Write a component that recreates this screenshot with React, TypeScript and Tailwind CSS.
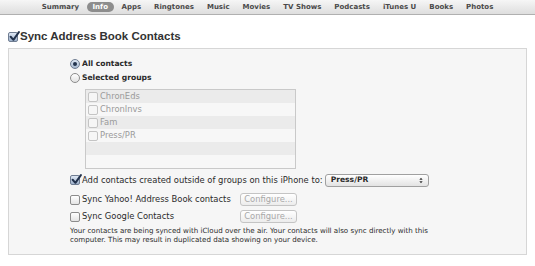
import React from "react";

const Check = ({ checked = false, disabled = false }: { checked?: boolean; disabled?: boolean }) => (
  <span
    className={`relative inline-flex w-[10px] h-[10px] shrink-0 rounded-[2px] border ${
      disabled
        ? "border-[#c4c4c4] bg-[#f6f6f6]"
        : checked
        ? "border-[#6f7d92] bg-gradient-to-b from-[#dfe8f4] to-[#9fb2cc]"
        : "border-[#8c8c8c] bg-gradient-to-b from-white to-[#e4e4e4]"
    }`}
  >
    {checked && (
      <svg viewBox="0 0 10 10" className="absolute left-[0px] top-[-2px] w-[11px] h-[11px]">
        <path d="M1.5 5.2 L4 8 L9 1" fill="none" stroke="#22324c" strokeWidth="1.8" strokeLinecap="round" strokeLinejoin="round" />
      </svg>
    )}
  </span>
);

const Radio = ({ checked = false }: { checked?: boolean }) => (
  <span
    className={`inline-flex w-[10px] h-[10px] shrink-0 rounded-full border items-center justify-center ${
      checked ? "border-[#6f7d92] bg-gradient-to-b from-[#dfe8f4] to-[#a6b8d0]" : "border-[#8c8c8c] bg-gradient-to-b from-white to-[#e2e2e2]"
    }`}
  >
    {checked && <span className="w-[4px] h-[4px] rounded-full bg-[#22324c]" />}
  </span>
);

const tabs = ["Summary", "Info", "Apps", "Ringtones", "Music", "Movies", "TV Shows", "Podcasts", "iTunes U", "Books", "Photos"];

export default function App() {
  const font = { fontFamily: '"DejaVu Sans", "Liberation Sans", sans-serif' };
  return (
    <div className="w-[535px] h-[266px] bg-white overflow-hidden" style={font}>
      <div className="h-[15px] bg-gradient-to-b from-[#f6f6f6] to-[#dedede] border-b border-[#b0b0b0] flex items-center justify-center text-[7px] font-bold text-[#4a4a4a]">
        {tabs.map((t) =>
          t === "Info" ? (
            <span key={t} className="mx-[1px] px-[6px] h-[10px] leading-[10px] rounded-full bg-[#8d8d8d] text-white">
              {t}
            </span>
          ) : (
            <span key={t} className="px-[6.5px]">
              {t}
            </span>
          )
        )}
      </div>

      <div className="flex items-center gap-[2px] ml-[8px] mt-[15px] h-[14px]">
        <Check checked />
        <span className="text-[11.5px] font-bold text-[#333]" style={{ fontFamily: '"Liberation Sans", sans-serif' }}>
          Sync Address Book Contacts
        </span>
      </div>

      <div className="mx-[8px] mt-[4px] h-[207px] border border-[#d6d6d6] bg-[#f6f6f6] pl-[61px] pt-[8px] text-[8.4px] text-[#2a2a2a]">
        <div className="flex items-center gap-[2px] h-[14px] font-bold text-[7.6px]">
          <Radio checked />
          <span>All contacts</span>
        </div>
        <div className="flex items-center gap-[2px] h-[14px] font-bold text-[7.6px]">
          <Radio />
          <span>Selected groups</span>
        </div>

        <div className="ml-[15px] mt-[4px] w-[211px] h-[80px] border border-[#c9c9c9] bg-[#f6f6f6] text-[#9a9a9a]">
          {["ChronEds", "ChronInvs", "Fam", "Press/PR", "", ""].map((g, i) => (
            <div key={i} className={`flex items-center gap-[2px] h-[13px] pl-[2px] ${i % 2 === 0 ? "bg-[#ebebeb]" : "bg-[#f7f7f7]"}`}>
              {g && <Check disabled />}
              <span>{g}</span>
            </div>
          ))}
        </div>

        <div className="flex items-center h-[18px] mt-[2px]">
          <Check checked />
          <span className="ml-[2px]">Add contacts created outside of groups on this iPhone to:</span>
          <div className="ml-[2px] w-[104px] h-[13px] rounded-[3px] border border-[#a0a0a0] bg-gradient-to-b from-white to-[#e3e3e3] flex items-center justify-between px-[5px] font-bold text-[7.6px]">
            <span>Press/PR</span>
            <svg viewBox="0 0 6 10" className="w-[4px] h-[7px]">
              <path d="M0.5 4 L3 1 L5.5 4 Z M0.5 6 L3 9 L5.5 6 Z" fill="#333" />
            </svg>
          </div>
        </div>

        <div className="flex items-center h-[17px] mt-[2px]">
          <Check />
          <span className="ml-[2px] w-[158px]">Sync Yahoo! Address Book contacts</span>
          <span className="w-[57px] h-[13px] rounded-[3px] border border-[#c4c4c4] bg-gradient-to-b from-white to-[#ececec] text-[#a8a8a8] flex items-center justify-center">
            Configure...
          </span>
        </div>
        <div className="flex items-center h-[17px]">
          <Check />
          <span className="ml-[2px] w-[158px]">Sync Google Contacts</span>
          <span className="w-[57px] h-[13px] rounded-[3px] border border-[#c4c4c4] bg-gradient-to-b from-white to-[#ececec] text-[#a8a8a8] flex items-center justify-center">
            Configure...
          </span>
        </div>

        <p className="mt-[1px] text-[7.1px] leading-[9px] text-[#2a2a2a]">
          Your contacts are being synced with iCloud over the air. Your contacts will also sync directly with this
          <br />
          computer. This may result in duplicated data showing on your device.
        </p>
      </div>
    </div>
  );
}
